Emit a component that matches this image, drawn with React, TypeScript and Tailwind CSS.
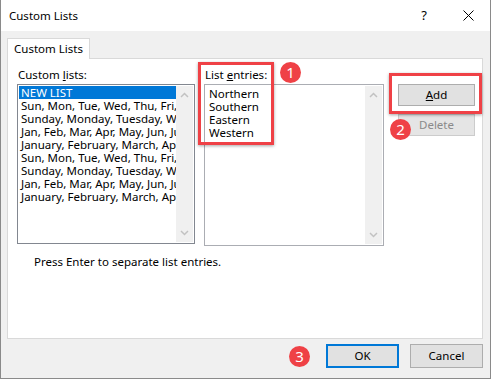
import React from "react";

const lists = [
  "Sun, Mon, Tue, Wed, Thu, Fri, Sat",
  "Sunday, Monday, Tuesday, Wednesday",
  "Jan, Feb, Mar, Apr, May, Jun, Jul",
  "January, February, March, April",
  "Sun, Mon, Tue, Wed, Thu, Fri, Sat",
  "Sunday, Monday, Tuesday, Wednesday",
  "Jan, Feb, Mar, Apr, May, Jun, Jul",
  "January, February, March, April",
];

const entries = ["Northern", "Southern", "Eastern", "Western"];

const Chevron = ({ up }: { up?: boolean }) => (
  <svg width="9" height="6" viewBox="0 0 9 6" className="block">
    <path
      d={up ? "M1 5 L4.5 1.5 L8 5" : "M1 1 L4.5 4.5 L8 1"}
      fill="none"
      stroke="#c2c2c2"
      strokeWidth="1.5"
    />
  </svg>
);

const ScrollBar = () => (
  <div className="w-[17px] h-full bg-[#f0f0f0] flex flex-col items-center justify-between py-[6px] shrink-0">
    <Chevron up />
    <Chevron />
  </div>
);

const Badge = ({ n, className }: { n: string; className: string }) => (
  <div
    className={
      "absolute w-[21px] h-[21px] rounded-full bg-[#ef4146] text-white text-[15px] leading-none flex items-center justify-center " +
      className
    }
  >
    {n}
  </div>
);

const App: React.FC = () => {
  return (
    <div className="w-[492px] h-[380px] bg-white font-['Noto_Sans',sans-serif] text-[11.5px] text-black">
      <div className="w-[491px] h-[379px] border-l border-r border-b border-[#8a8a8a] flex flex-col">
        {/* title bar */}
        <div className="h-[31px] bg-white flex items-center pl-[8px] pr-[16px] shrink-0">
          <span className="text-[11.5px] flex-1">Custom Lists</span>
          <span className="text-[13px] mr-[36px]">?</span>
          <svg width="11" height="11" viewBox="0 0 11 11">
            <path d="M0.5 0.5 L10.5 10.5 M10.5 0.5 L0.5 10.5" stroke="#000" strokeWidth="1" />
          </svg>
        </div>

        {/* body */}
        <div className="flex-1 bg-[#f0f0f0] relative pl-[6px] pt-[7px]">
          <div className="w-[83px] h-[21px] bg-white border border-b-0 border-[#d9d9d9] flex items-center justify-center relative z-10 -mb-px">
            Custom Lists
          </div>
          <div className="w-[476px] h-[281px] bg-white border border-[#d9d9d9] relative">
            <div className="flex pt-[7px] pl-[9px]">
              {/* custom lists */}
              <div className="flex flex-col">
                <div className="h-[18px] leading-[18px] pl-px">
                  Custom <span className="underline">l</span>ists:
                </div>
                <div className="w-[178px] h-[160px] border border-[#828790] flex p-px">
                  <div className="flex-1 overflow-hidden">
                    <div className="bg-[#0078d7] text-white h-[13px] leading-[13px] pl-[2px] whitespace-nowrap">
                      NEW LIST
                    </div>
                    {lists.map((l, i) => (
                      <div key={i} className="h-[13px] leading-[13px] pl-[2px] whitespace-nowrap">
                        {l}
                      </div>
                    ))}
                  </div>
                  <ScrollBar />
                </div>
              </div>

              {/* list entries */}
              <div className="flex flex-col ml-[9px]">
                <div className="h-[18px] leading-[18px] pl-[1px]">
                  List <span className="underline">e</span>ntries:
                </div>
                <div className="w-[180px] h-[162px] border border-[#abadb3] flex p-px">
                  <div className="flex-1 pl-[3px] pt-px">
                    {entries.map((e) => (
                      <div key={e} className="h-[13px] leading-[13px]">
                        {e}
                      </div>
                    ))}
                  </div>
                  <ScrollBar />
                </div>
              </div>

              {/* buttons */}
              <div className="flex flex-col ml-[14px] pt-[18px] gap-[8px]">
                <div className="w-[77px] h-[22px] bg-[#e1e1e1] border border-[#adadad] flex items-center justify-center">
                  <span>
                    <span className="underline">A</span>dd
                  </span>
                </div>
                <div className="w-[77px] h-[22px] bg-[#e5e5e5] border border-[#cccccc] flex items-center justify-center text-[#8a8a8a]">
                  Delete
                </div>
              </div>
            </div>

            <div className="pl-[26px] pt-[7px]">Press Enter to separate list entries.</div>

            {/* annotations */}
            <div className="absolute left-[190px] top-[3px] w-[76px] h-[83px] border-[3px] border-[#ef4146] shadow-[0_1px_3px_rgba(0,0,0,0.35)]" />
            <div className="absolute left-[381px] top-[14px] w-[93px] h-[41px] border-[3px] border-[#ef4146] shadow-[0_1px_3px_rgba(0,0,0,0.35)]" />
            <Badge n="1" className="left-[272px] top-[3px]" />
            <Badge n="2" className="left-[382px] top-[60px]" />
          </div>

          {/* dialog buttons */}
          <div className="flex justify-end items-center gap-[11px] pr-[7px] pt-[5px]">
            <div className="w-[21px] h-[21px] rounded-full bg-[#ef4146] text-white text-[15px] leading-none flex items-center justify-center mr-[5px]">
              3
            </div>
            <div className="w-[73px] h-[24px] bg-[#e1e1e1] border-2 border-[#0078d7] flex items-center justify-center">
              OK
            </div>
            <div className="w-[73px] h-[24px] bg-[#e1e1e1] border border-[#adadad] flex items-center justify-center">
              Cancel
            </div>
          </div>
        </div>
      </div>
    </div>
  );
};

export default App;
